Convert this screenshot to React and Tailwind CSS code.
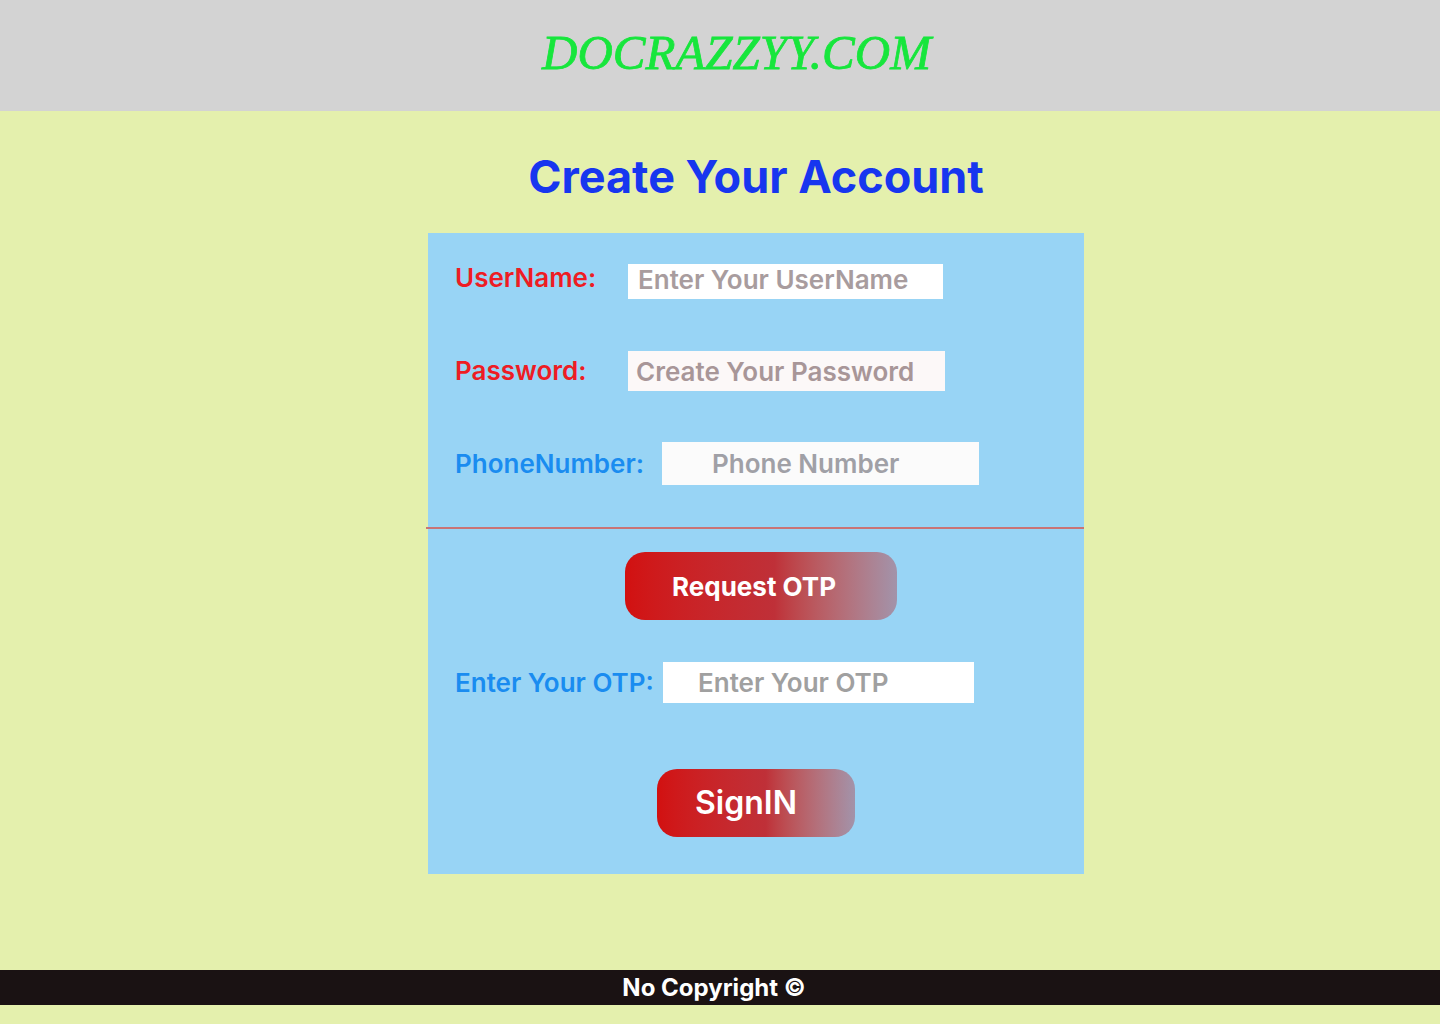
import React from 'react';

const inter = { fontFamily: 'Inter, "Noto Sans", sans-serif' };

const SignUp = () => {
  return (
    <div className="min-h-screen bg-[#e4f0ad]" style={inter}>
      {/* header */}
      <header className="h-[111px] bg-[#d3d3d3] flex items-center justify-center pl-[33px] pb-[6px]">
        <h1
          className="text-[49px] italic text-[#17e63c] leading-none [-webkit-text-stroke:0.8px_#17e63c]"
          style={{ fontFamily: '"Liberation Serif", "DejaVu Serif", serif' }}
        >
          DOCRAZZYY.COM
        </h1>
      </header>

      {/* main */}
      <main className="flex flex-col items-center pl-[72px] pt-[38px] pb-[96px]">
        <h2 className="text-[45px] font-bold text-[#1736ef] leading-[56px]">Create Your Account</h2>

        <div className="w-[656px] h-[641px] mt-[28px] bg-[#98d4f5] flex flex-col">
          <div className="pl-[27px] pt-[31px] flex flex-col">
            <div className="flex items-center h-[35px]">
              <label className="w-[173px] mb-[8px] text-[26px] leading-[30px] font-semibold text-[#ee1c24]">UserName:</label>
              <input
                className="w-[315px] h-[35px] bg-white pl-[10px] pb-[5px] text-[26px] font-semibold outline-none placeholder:text-[#a89c9e]"
                placeholder="Enter Your UserName"
              />
            </div>
            <div className="flex items-center h-[40px] mt-[52px]">
              <label className="w-[173px] text-[26px] leading-[30px] font-semibold text-[#ee1c24]">Password:</label>
              <input
                className="w-[317px] h-[40px] bg-[#fcf8f8] pl-[8px] text-[26px] font-semibold outline-none placeholder:text-[#a89698]"
                placeholder="Create Your Password"
              />
            </div>
            <div className="flex items-center h-[43px] mt-[51px]">
              <label className="w-[207px] text-[26px] leading-[30px] font-semibold text-[#1a8cf0]">PhoneNumber:</label>
              <input
                className="w-[317px] h-[43px] bg-[#fbfbfb] pl-[50px] text-[26px] font-semibold outline-none placeholder:text-[#a0a0a6]"
                placeholder="Phone Number"
              />
            </div>
          </div>

          <div className="mt-[42px] h-[2px] bg-[#c97476] -ml-[2px]" />

          <div className="flex flex-col">
            <div className="flex justify-center mt-[23px] pl-[10px]">
              <button className="w-[272px] h-[68px] rounded-[20px] pr-[14px] text-white text-[26px] font-bold bg-gradient-to-r from-[#d21010] via-[#bf3038] via-55% to-[#a293aa]">
                Request OTP
              </button>
            </div>

            <div className="flex items-center h-[41px] pl-[27px] mt-[42px]">
              <label className="w-[208px] text-[26px] leading-[30px] font-semibold text-[#1a8cf0]">Enter Your OTP:</label>
              <input
                className="w-[311px] h-[41px] bg-white pl-[35px] text-[26px] font-semibold outline-none placeholder:text-[#a0a0a0]"
                placeholder="Enter Your OTP"
              />
            </div>

            <div className="flex justify-center mt-[66px]">
              <button className="w-[198px] h-[68px] rounded-[20px] text-white text-[32px] font-semibold text-left pl-[38px] bg-gradient-to-r from-[#d21010] via-[#bf3038] via-55% to-[#a293aa]">
                SignIN
              </button>
            </div>
          </div>
        </div>
      </main>

      {/* footer */}
      <footer className="h-[35px] bg-[#1a1213] flex items-center justify-center pr-[12px]">
        <p className="text-white text-[24px] font-bold">No Copyright ©</p>
      </footer>
    </div>
  );
};

export default SignUp;
